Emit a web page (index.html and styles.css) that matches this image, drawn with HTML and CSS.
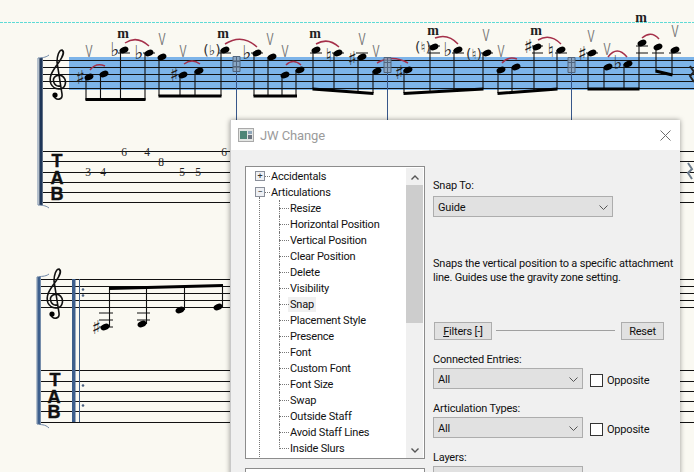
FILE: index.html
```html
<!DOCTYPE html>
<html lang="en">
<head>
<meta charset="utf-8">
<title>JW Change</title>
<link rel="stylesheet" href="styles.css">
</head>
<body>
<main class="page">
<svg class="score" width="694" height="472" viewBox="0 0 694 472">
  <defs>
    <ellipse id="n" rx="4.6" ry="3.1" transform="rotate(-22)"/>
    <g id="clef">
      <path class="clef" d="M60 86C54 87 51 79 56 76C62 73 67 79 65 85C63 91 54 90 51 84C48 76 54 69 59 62C63 56 65 52 62 50C59 50 57 56 57 62L62 94C63 100 56 101 54 96"/>
      <circle cx="55" cy="95" r="2.6"/>
    </g>
    <path id="guide" class="guide" d="M0 0H7V15H0ZM0 5H7M0 10H7M3.5 0V15"/>
  </defs>
  <line class="dash" x1="0" y1="22.5" x2="694" y2="22.5"/>
  <rect class="hl" x="69" y="57" width="625" height="33"/>

  <g class="lines">
    <path d="M43 60.5H694M43 67.5H694M43 74.5H694M43 81.5H694M43 88.5H694"/>
    <path d="M43 151.5H694M43 161.5H694M43 172.5H694M43 182.5H694M43 192.5H694M43 202.5H694"/>
    <path d="M41 279.5H694M41 286.5H694M41 293.5H694M41 300.5H694M41 307.5H694"/>
    <path d="M41 370.5H694M41 381.5H694M41 391.5H694M41 401.5H694M41 411.5H694M41 422.5H694"/>
  </g>

  <path class="brk dark" d="M41 58V205"/>
  <path class="hook" d="M49 55C45 58 42 57.500 38 58V205C42 205.500 45 205 49 208"/>
  <path class="brk" d="M39 277V424"/>
  <path class="hook" d="M49 274C45 277 41 276 37 277V424C41 425 45 424 49 428"/>
  <use href="#clef"/>
  <use href="#clef" transform="translate(-3 219)"/>
  <text class="tab" x="57" y="167">T</text><text class="tab" x="57" y="184">A</text><text class="tab" x="57" y="200">B</text>
  <text class="tab" x="55" y="386">T</text><text class="tab" x="54" y="403">A</text><text class="tab" x="54" y="418">B</text>

  <path class="ldg" d="M118 53H130M143 53H155M218 53H231M251 53H263M310 53H322M332 53H344M356 53H368M428 53H440M428 46H440M452 53H464M481 53H493M532 53H543M532 46H543M555 53H567M586 53H598M636 53H648M636 46H648M652 53H664M669 53H681"/>
  <path class="stem" d="M86 77V100M100.500 74V100M120.500 50V100M145 53V100M159 57V96M180 75V96M195 71V96M221 50V96M254 53V96M268 57V96M282 75V96M296 70V96M313 50V89M334 53V91M358 57V92M373 71V93M404 70V93M430 47V92M454 50V91M483 53V89M498 70V93M512 67V92M534 47V90M557 50V89M588 53V89M604 67V89M624 64V89M639 43V89M656 47V71M672 50V75"/>
  <path class="beam" d="M85.500 99.500H145.500M158.500 96H221.500M253.500 96H297M312.500 89L373.500 93.500M403.500 93.500L483.500 89M497.500 93.500L557.500 89M587.500 89H639.500M655.500 71L672.500 75"/>
  <g>
    <use href="#n" x="89" y="77"/><use href="#n" x="104" y="74"/><use href="#n" x="124" y="50"/><use href="#n" x="149" y="53"/>
    <use href="#n" x="162" y="57"/><use href="#n" x="183" y="75"/><use href="#n" x="199" y="71"/><use href="#n" x="225" y="50"/>
    <use href="#n" x="257" y="53"/><use href="#n" x="272" y="57"/><use href="#n" x="285" y="75"/><use href="#n" x="300" y="70"/>
    <use href="#n" x="316" y="50"/><use href="#n" x="338" y="53"/><use href="#n" x="362" y="57"/><use href="#n" x="377" y="71"/>
    <use href="#n" x="408" y="70"/><use href="#n" x="434" y="47"/><use href="#n" x="458" y="50"/><use href="#n" x="487" y="53"/>
    <use href="#n" x="501" y="70"/><use href="#n" x="516" y="67"/><use href="#n" x="537" y="47"/><use href="#n" x="561" y="50"/>
    <use href="#n" x="592" y="53"/><use href="#n" x="608" y="67"/><use href="#n" x="628" y="64"/><use href="#n" x="642" y="43"/>
    <use href="#n" x="658" y="47"/><use href="#n" x="675" y="50"/>
  </g>

  <g class="acc">
    <text x="80" y="84">♯</text><text x="115" y="56">♭</text><text x="139" y="59">♭</text><text x="174" y="81">♯</text>
    <text x="212" y="55" class="ghost">(♭)</text><text x="247" y="59">♭</text><text x="329" y="62">♮</text><text x="352" y="65">♯</text>
    <text x="399" y="79">♯</text><text x="423" y="52" class="ghost">(♮)</text><text x="448" y="56">♭</text><text x="474" y="59" class="ghost">(♮)</text>
    <text x="528" y="53">♯</text><text x="551" y="57">♮</text><text x="582" y="60">♯</text><text x="618" y="69">♭</text>
    <text x="96" y="334">♯</text>
  </g>

  <path class="slur" d="M90 70Q96 62 105 66M125 43Q137 35 149 46M184 64Q192 58 200 64M225 44Q242 33 257 47M286 65Q293 58 301 65M316 44Q328 37 339 47M377 63Q392 54 408 63M435 38Q448 33 458 44M502 63Q508 56 517 59M538 40Q550 33 561 44M608 57Q617 45 627 57M642 38Q651 30 659 39"/>

  <g class="bow">
    <text x="89" y="57" textLength="7" lengthAdjust="spacingAndGlyphs">V</text>
    <text x="162" y="45" textLength="7" lengthAdjust="spacingAndGlyphs">V</text>
    <text x="183" y="57" textLength="7" lengthAdjust="spacingAndGlyphs">V</text>
    <text x="270" y="45" textLength="7" lengthAdjust="spacingAndGlyphs">V</text>
    <text x="285" y="57" textLength="7" lengthAdjust="spacingAndGlyphs">V</text>
    <text x="362" y="45" textLength="7" lengthAdjust="spacingAndGlyphs">V</text>
    <text x="376" y="57" textLength="7" lengthAdjust="spacingAndGlyphs">V</text>
    <text x="486" y="41" textLength="7" lengthAdjust="spacingAndGlyphs">V</text>
    <text x="501" y="57" textLength="7" lengthAdjust="spacingAndGlyphs">V</text>
    <text x="591" y="42" textLength="7" lengthAdjust="spacingAndGlyphs">V</text>
    <text x="607" y="55" textLength="7" lengthAdjust="spacingAndGlyphs">V</text>
    <text x="675" y="37" textLength="7" lengthAdjust="spacingAndGlyphs">V</text>
  </g>
  <g class="fing">
    <text x="123" y="38">m</text><text x="223" y="38">m</text><text x="315" y="38">m</text><text x="433" y="35">m</text><text x="536" y="35">m</text><text x="641" y="22">m</text>
  </g>
  <g class="frets">
    <text x="124" y="156">6</text><text x="147" y="156">4</text><text x="161" y="166">8</text><text x="224" y="156">6</text>
    <text x="88" y="176">3</text><text x="103" y="176">4</text><text x="182" y="176">5</text><text x="198" y="176">5</text>
  </g>

  <path class="gline" d="M236.500 72V120M387.500 72V120M571.500 72V120"/>
  <use href="#guide" x="233" y="56.500"/><use href="#guide" x="384" y="57.500"/><use href="#guide" x="568" y="57.500"/>
  <path class="rest" d="M690 66L694 72L690 76L694 82"/>
  <path class="rest soft" d="M688 163L692 169L688 173L692 179"/>

  <rect class="bar" x="72" y="279" width="3.500" height="143"/>
  <rect class="bar" x="79" y="279" width="1" height="143"/>
  <g class="dots"><circle cx="83" cy="289.500" r="1.300"/><circle cx="83" cy="295.500" r="1.300"/><circle cx="83" cy="385.500" r="1.300"/><circle cx="83" cy="405.500" r="1.300"/></g>
  <path class="ldg" d="M99 313H113M99 320H113M99 327H113M137 313H150M137 320H150"/>
  <path class="stem" d="M109.500 327V288M146.500 324V287.500M184.500 310V286.500M222.500 307V285"/>
  <path class="beam" d="M109 288.500L223 285.500"/>
  <use href="#n" x="105" y="327"/><use href="#n" x="142" y="324"/><use href="#n" x="180" y="310"/><use href="#n" x="218" y="307"/>
</svg>

<section class="dialog">
  <header class="titlebar">
    <svg class="appicon" width="16" height="14" viewBox="0 0 16 14">
      <rect x="0.500" y="0.500" width="15" height="13" fill="#e4e6e4" stroke="#a9a9a9"/>
      <rect x="2" y="3" width="7" height="8" fill="#4f8577"/>
      <rect x="10" y="3" width="4" height="3" fill="#8fa6ba"/>
      <rect x="10" y="7" width="4" height="4" fill="#6c7480"/>
    </svg>
    <span class="title">JW Change</span>
    <svg class="close" width="11" height="11" viewBox="0 0 11 11"><path d="M.5.500L10.500 10.500M10.500.500L.5 10.500"/></svg>
  </header>
  <div class="body">
    <div class="leftcol">
      <div class="tree">
        <ul class="items">
          <li class="root"><span class="box">+</span><span>Accidentals</span></li>
          <li class="root open"><span class="box">−</span><span>Articulations</span></li>
          <li class="leaf"><span>Resize</span></li>
          <li class="leaf"><span>Horizontal Position</span></li>
          <li class="leaf"><span>Vertical Position</span></li>
          <li class="leaf"><span>Clear Position</span></li>
          <li class="leaf"><span>Delete</span></li>
          <li class="leaf"><span>Visibility</span></li>
          <li class="leaf"><span class="sel">Snap</span></li>
          <li class="leaf"><span>Placement Style</span></li>
          <li class="leaf"><span>Presence</span></li>
          <li class="leaf"><span>Font</span></li>
          <li class="leaf"><span>Custom Font</span></li>
          <li class="leaf"><span>Font Size</span></li>
          <li class="leaf"><span>Swap</span></li>
          <li class="leaf"><span>Outside Staff</span></li>
          <li class="leaf"><span>Avoid Staff Lines</span></li>
          <li class="leaf"><span>Inside Slurs</span></li>
        </ul>
        <div class="scrollbar">
          <svg class="arrow" width="8" height="5" viewBox="0 0 8 5"><path d="M.5 4.500L4 1L7.500 4.500"/></svg>
          <div class="track"><div class="thumb"></div></div>
          <svg class="arrow" width="8" height="5" viewBox="0 0 8 5"><path d="M.5.500L4 4L7.500.500"/></svg>
        </div>
      </div>
      <div class="treenext"></div>
    </div>
    <div class="rightcol">
      <label class="lbl snaplabel">Snap To:</label>
      <div class="select wide"><span>Guide</span><svg class="chev" width="9" height="5" viewBox="0 0 9 5"><path d="M.5.500L4.500 4.500L8.500.500"/></svg></div>
      <p class="desc">Snaps the vertical position to a specific attachment<br>line. Guides use the gravity zone setting.</p>
      <div class="filters">
        <button class="btn fbtn"><span class="ul">F</span>ilters [-]</button>
        <div class="rule"></div>
        <button class="btn rbtn">Reset</button>
      </div>
      <label class="lbl first">Connected Entries:</label>
      <div class="row">
        <div class="select"><span>All</span><svg class="chev" width="9" height="5" viewBox="0 0 9 5"><path d="M.5.500L4.500 4.500L8.500.500"/></svg></div>
        <span class="check"></span><span class="opp">Opposite</span>
      </div>
      <label class="lbl next">Articulation Types:</label>
      <div class="row">
        <div class="select"><span>All</span><svg class="chev" width="9" height="5" viewBox="0 0 9 5"><path d="M.5.500L4.500 4.500L8.500.500"/></svg></div>
        <span class="check"></span><span class="opp">Opposite</span>
      </div>
      <label class="lbl next">Layers:</label>
      <div class="row">
        <div class="select"></div>
        <span class="check"></span>
      </div>
    </div>
  </div>
</section>
</main>
</body>
</html>
```

FILE: styles.css
```css
* { box-sizing: border-box; }
html, body { margin: 0; padding: 0; }
body { background: #faf9f2; overflow: hidden; }
.page { position: relative; width: 694px; height: 472px; overflow: hidden; background: #faf9f2; }

.score { display: block; }
.dash { stroke: #5edbd6; stroke-width: 1; stroke-dasharray: 3 1; }
.hl { fill: #7db4e9; }
.lines path { fill: none; stroke: #111; stroke-width: 1; }
.brk { fill: none; stroke: #3d5f8c; stroke-width: 3.4; }
.brk.dark { stroke: #1e3658; }
.hook { fill: none; stroke: #6f87a6; stroke-width: 1; }
.clef { fill: none; stroke: #111; stroke-width: 1.6; }
.tab { font: bold 18px "Liberation Sans", sans-serif; text-anchor: middle; fill: #111; stroke: #111; stroke-width: .4; }
.ldg { fill: none; stroke: #111; stroke-width: 1; }
.stem { fill: none; stroke: #111; stroke-width: 1.1; }
.beam { fill: none; stroke: #000; stroke-width: 3; }
.acc text { font: 19px "DejaVu Sans", sans-serif; text-anchor: middle; fill: #222; }
.acc text.ghost { font-size: 14px; fill: #333; }
.slur { fill: none; stroke: #a5304a; stroke-width: 1.5; }
.bow text { font: 16px "Liberation Sans", sans-serif; text-anchor: middle; fill: #777; }
.fing text { font: bold 14px "Liberation Serif", serif; text-anchor: middle; fill: #222; }
.frets text { font: 11.5px "Liberation Serif", serif; text-anchor: middle; fill: #222; }
.gline { fill: none; stroke: #37578a; stroke-width: 1; }
.guide { fill: #8fa3b8; fill-opacity: .75; stroke: #52667f; stroke-width: 1; }
.rest { fill: none; stroke: #222; stroke-width: 2; }
.rest.soft { stroke: #6d7c8c; }
.bar { fill: #3d5f8c; }
.dots circle { fill: #4a6080; }

.dialog {
  position: absolute; left: 230px; top: 120px; width: 450px; height: 370px;
  background: #f0f0f0; border-left: 1px solid #c9c9c9; box-shadow: 0 0 5px rgba(0,0,0,.4);
  font: 11px Roboto, "Liberation Sans", sans-serif; letter-spacing: -.2px; color: #111;
}
.titlebar { display: flex; align-items: center; height: 30px; padding: 0 9px 0 7px; background: #fff; }
.appicon { display: block; }
.title { margin-left: 6px; flex: 1; font-size: 13px; color: #9b9b9b; letter-spacing: -.1px; }
.close { display: block; margin-right: 0; }
.close path { fill: none; stroke: #6e6e6e; stroke-width: 1; }

.body { display: flex; padding: 16px 0 0 14px; gap: 8px; }
.leftcol { width: 180px; flex: none; }
.tree { position: relative; display: flex; height: 293px; background: #fff; border: 1px solid #8c8c8c; overflow: hidden; }
.items { list-style: none; margin: 0; padding: 1px 0 0; flex: 1; }
.items li { position: relative; display: flex; align-items: center; height: 16px; white-space: nowrap; }
.root { padding-left: 25px; }
.leaf { padding-left: 44px; }
.box {
  position: absolute; left: 9px; top: 3px; width: 10px; height: 10px;
  display: flex; align-items: center; justify-content: center;
  background: #eef0f4; border: 1px solid #8a8f9a; font-size: 9px; line-height: 1; color: #333;
}
.root::after { content: ""; position: absolute; left: 19px; top: 8px; width: 5px; border-top: 1px dotted #777; }
.open::before { content: ""; position: absolute; left: 13px; top: 13px; height: 272px; border-left: 1px dotted #777; }
.leaf::before { content: ""; position: absolute; left: 33px; top: 0; height: 16px; border-left: 1px dotted #777; }
.leaf::after { content: ""; position: absolute; left: 33px; top: 8px; width: 10px; border-top: 1px dotted #777; }
.leaf:last-child::before { height: 9px; }
.sel { background: #f0f0f0; padding: 0 2px; margin-left: -2px; height: 15px; line-height: 15px; }

.scrollbar { flex: none; width: 17px; margin-right: 1px; margin-top: 1px; display: flex; flex-direction: column; align-items: center; background: #f0f0f0; }
.arrow { display: block; margin: 7px 0 5px; flex: none; }
.arrow path { fill: none; stroke: #555; stroke-width: 1.4; }
.track { flex: 1; width: 100%; }
.thumb { height: 138px; background: #cdcdcd; }
.treenext { height: 40px; margin-top: 9px; background: #fff; border: 1px solid #8c8c8c; }

.rightcol { width: 242px; flex: none; }
.lbl { display: block; line-height: 16px; padding-top: 1px; }
.snaplabel { margin-top: 11px; }
.select {
  display: flex; align-items: center; justify-content: space-between;
  width: 150px; height: 21px; padding: 2px 4px 0 4px;
  background: #e1e1e1; border: 1px solid #adadad; flex: none;
}
.select.wide { width: 180px; margin-top: 2px; }
.chev { display: block; }
.chev path { fill: none; stroke: #555; stroke-width: 1; }
.desc { margin: 40px 0 0; line-height: 14px; width: 242px; white-space: nowrap; }
.filters { display: flex; align-items: center; margin-top: 37px; padding-left: 1px; width: 231px; }
.btn { font: inherit; letter-spacing: inherit; color: #111; height: 18px; padding: 0; background: #e1e1e1; border: 1px solid #adadad; }
.fbtn { width: 58px; }
.rbtn { width: 43px; }
.rule { flex: 1; height: 1px; margin: 0 6px 0 4px; background: #a0a0a0; transform: translateY(-1px); }
.ul { text-decoration: underline; }
.first { margin-top: 11px; }
.next { margin-top: 11px; }
.row { display: flex; align-items: center; }
.check { width: 13px; height: 13px; margin: 3px 4px 0 7px; background: #fff; border: 1px solid #333; flex: none; }
.opp { margin-top: 3px; }
```
